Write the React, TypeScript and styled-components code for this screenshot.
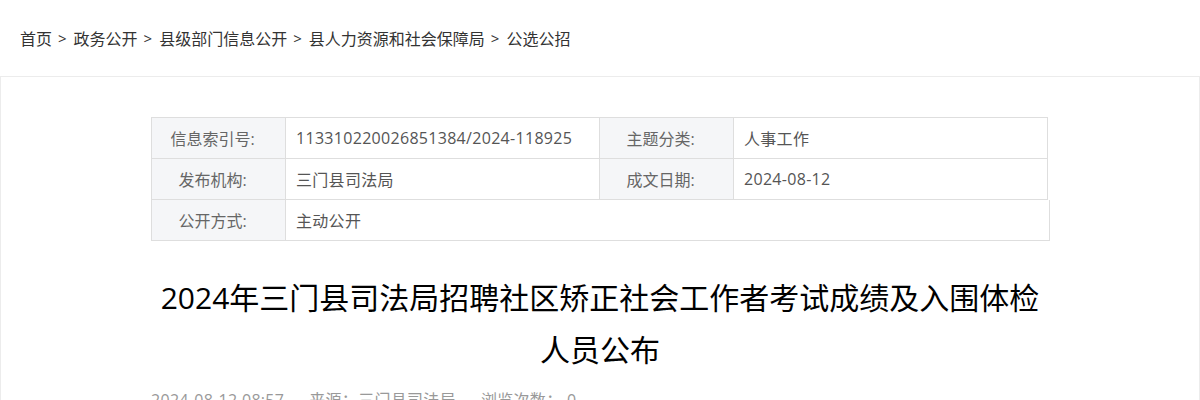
import styled, { createGlobalStyle } from "styled-components"

const GlobalStyle = createGlobalStyle`
  body {
    margin: 0;
    background: #fff;
    font-family: "Open Sans", "Noto Sans CJK SC", sans-serif;
  }
`

const crumbs = ["首页", "政务公开", "县级部门信息公开", "县人力资源和社会保障局", "公选公招"]

const App = () => {
    return (
        <div>
        <GlobalStyle />
        <Breadcrumb>
        {crumbs.map((c, i) => (
            <Crumb key={c}>
            {c}
            {i < crumbs.length - 1 && <Sep>&gt;</Sep>}
            </Crumb>
        ))}
        </Breadcrumb>

        <Card>
        <InfoTable>
        <Row>
        <Label>信息索引号:</Label>
        <Value>113310220026851384/2024-118925</Value>
        <Label>主题分类:</Label>
        <Value>人事工作</Value>
        </Row>
        <Row>
        <Label>发布机构:</Label>
        <Value>三门县司法局</Value>
        <Label>成文日期:</Label>
        <Value>2024-08-12</Value>
        </Row>
        <Row $single>
        <Label>公开方式:</Label>
        <Value>主动公开</Value>
        </Row>
        </InfoTable>

        <Title>2024年三门县司法局招聘社区矫正社会工作者考试成绩及入围体检人员公布</Title>

        <Meta>
        <MetaItem>2024-08-12 08:57</MetaItem>
        <MetaItem>来源：三门县司法局</MetaItem>
        <MetaItem>浏览次数： 0</MetaItem>
        </Meta>
        </Card>
        </div>
    )
}

export default App

const Breadcrumb = styled.div`
height: 76px;
display: flex;
align-items: center;
padding-left: 20px;
font-size: 16px;
color: #333;
`;

const Crumb = styled.span`
display: inline-flex;
align-items: center;
`;

const Sep = styled.span`
margin: 0 7px 0 6px;
font-size: 15px;
`;

const Card = styled.div`
border: 1px solid #ececec;
border-bottom: none;
background: #fff;
padding-top: 40px;
min-height: 400px;
`;

const InfoTable = styled.div`
width: 898px;
margin: 0 auto;
font-size: 16px;
`;

const Row = styled.div<{ $single?: boolean }>`
display: grid;
grid-template-columns: ${p => p.$single ? "134px 764px" : "134px 314px 134px 314px"};
width: ${p => p.$single ? "898px" : "897px"};
box-sizing: border-box;
border-left: 1px solid #dedede;
&:first-child {
  border-top: 1px solid #dedede;
}
`;

const Label = styled.div`
height: 41px;
display: flex;
align-items: center;
justify-content: center;
padding-right: 12px;
box-sizing: border-box;
background: #f5f6f8;
color: #666;
border-right: 1px solid #dedede;
border-bottom: 1px solid #dedede;
`;

const Value = styled.div`
height: 41px;
display: flex;
align-items: center;
padding-left: 10px;
box-sizing: border-box;
color: #555;
letter-spacing: 0.3px;
border-right: 1px solid #dedede;
border-bottom: 1px solid #dedede;
`;

const Title = styled.h1`
width: 900px;
margin: 31px auto 0;
text-align: center;
font-size: 30px;
line-height: 52px;
font-weight: 400;
color: #000;
`;

const Meta = styled.div`
width: 898px;
margin: 12px auto 0;
display: flex;
gap: 25px;
font-size: 16px;
line-height: 24px;
letter-spacing: 0.3px;
color: #999;
`;

const MetaItem = styled.span``;
